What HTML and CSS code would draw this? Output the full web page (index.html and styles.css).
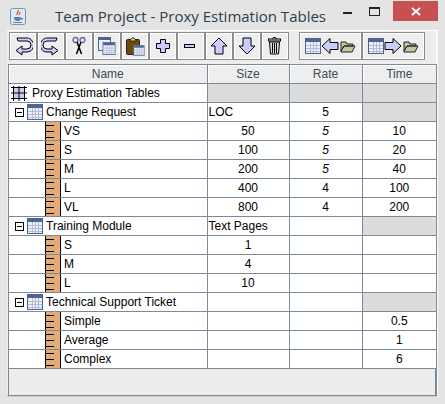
FILE: index.html
```html
<!DOCTYPE html>
<html lang="en">
<head>
    <meta charset="UTF-8">
    <meta name="viewport" content="width=device-width, initial-scale=1.0">
    <title>Team Project - Proxy Estimation Tables</title>
    <link rel="stylesheet" href="styles.css">
</head>
<body>

<svg class="defs" width="0" height="0">
    <defs>
        <symbol id="grid" viewBox="0 0 16 16">
            <rect x="0.5" y="0.5" width="15" height="15" fill="#eef0f8" stroke="#4f6390"/>
            <rect x="1" y="1" width="14" height="3" fill="#4f6390"/>
            <path d="M5.5 4v11M8.5 4v11M11.5 4v11M1 7.5h14M1 10.5h14M1 13.5h14" stroke="#b4bbd8" fill="none"/>
        </symbol>
        <symbol id="ruler" viewBox="0 0 16 19">
            <rect x="0" y="0" width="16" height="19" fill="#e4ab78"/>
            <path d="M0.5 0v19M15.5 0v19M1 3.5h8M1 9.5h8M1 15.5h8" stroke="#000" fill="none"/>
        </symbol>
        <symbol id="folder" viewBox="0 0 16 14">
            <path d="M1 12V3h5l1 2h6v2H4L1 12l3-5h11l-3 6H1z" fill="#c3c8a0" stroke="#222" stroke-width="1" stroke-linejoin="round"/>
        </symbol>
        <symbol id="toggle" viewBox="0 0 9 9">
            <rect x="0.5" y="0.5" width="8" height="8" fill="#fff" stroke="#000"/>
            <path d="M2 4.5h5" stroke="#000"/>
        </symbol>
    </defs>
</svg>

<div class="titlebar">
    <svg class="appicon" width="16" height="17" viewBox="0 0 16 17">
        <rect x="0.5" y="0.5" width="15" height="16" rx="2" fill="#dfe9f3" stroke="#7d94ad"/>
        <path d="M4 9h7c0 3-1 4-3.500 4S4 12 4 9zM11 10h2v1.500h-2z" fill="#5a7fa8"/>
        <path d="M8 2c1 2-2 3-1 5M10 4c0 1-1 2-1 3" stroke="#d9531e" fill="none" stroke-width="1.200"/>
        <path d="M3 14.500h9" stroke="#5a7fa8"/>
    </svg>
    <span class="title">Team Project - Proxy Estimation Tables</span>
    <div class="winbtns">
        <span class="minimize"></span>
        <span class="maximize"></span>
        <span class="close">
            <svg width="10" height="9" viewBox="0 0 10 9"><path d="M1 1l8 7M9 1L1 8" stroke="#fff" stroke-width="2"/></svg>
        </span>
    </div>
</div>

<div class="panel">
    <div class="toolbar">
        <button class="tool">
            <svg width="20" height="20" viewBox="0 0 20 20"><path d="M5 5h9a4 4 0 0 1 0 8H9v-3l-6 4.500 6 4.500v-3h5a7 7 0 0 0 4-12.500C16 2 15 2 14 2H4z" fill="#ccccff" stroke="#000" stroke-linejoin="round"/></svg>
        </button>
        <button class="tool">
            <svg width="20" height="20" viewBox="0 0 20 20"><path d="M15 5H6a4 4 0 0 0 0 8h5v-3l6 4.500-6 4.500v-3H6a7 7 0 0 1-4-12.500C4 2 5 2 6 2h10z" fill="#ccccff" stroke="#000" stroke-linejoin="round"/></svg>
        </button>
        <button class="tool">
            <svg width="20" height="20" viewBox="0 0 20 20"><circle cx="6.500" cy="4" r="2.500" fill="none" stroke="#5a6a9a" stroke-width="1.300"/><circle cx="13.500" cy="4" r="2.500" fill="none" stroke="#5a6a9a" stroke-width="1.300"/><path d="M8 6l4.500 12M12 6L7.500 18" stroke="#000" stroke-width="1.500"/></svg>
        </button>
        <button class="tool">
            <svg width="20" height="20" viewBox="0 0 20 20"><rect x="1.500" y="1.500" width="12" height="13" fill="#eef0f8" stroke="#4f6390"/><rect x="2" y="2" width="11" height="2" fill="#4f6390"/><use href="#grid" x="5" y="6" width="14" height="13"/></svg>
        </button>
        <button class="tool">
            <svg width="20" height="20" viewBox="0 0 20 20"><rect x="1.500" y="3.500" width="13" height="15" rx="1" fill="#6b4a10" stroke="#222"/><path d="M5 4l3-2.500L11 4v1H5z" fill="#f5e04a" stroke="#222"/><use href="#grid" x="8" y="9" width="12" height="11"/></svg>
        </button>
        <button class="tool">
            <svg width="20" height="20" viewBox="0 0 20 20"><path d="M7.500 3.500h5v4h4v5h-4v4h-5v-4h-4v-5h4z" fill="#ccccff" stroke="#000"/></svg>
        </button>
        <button class="tool">
            <svg width="20" height="20" viewBox="0 0 20 20"><rect x="3.500" y="8.500" width="10" height="3" fill="#ccccff" stroke="#000"/></svg>
        </button>
        <button class="tool">
            <svg width="20" height="20" viewBox="0 0 20 20"><path d="M10 2l8 8h-4v8H6v-8H2z" fill="#ccccff" stroke="#000" stroke-linejoin="round"/></svg>
        </button>
        <button class="tool">
            <svg width="20" height="20" viewBox="0 0 20 20"><path d="M10 18l8-8h-4V2H6v8H2z" fill="#ccccff" stroke="#000" stroke-linejoin="round"/></svg>
        </button>
        <button class="tool">
            <svg width="20" height="20" viewBox="0 0 20 20"><rect x="3.500" y="3" width="12" height="2" fill="#ddd" stroke="#000"/><path d="M7.500 3l1-1.500h2l1 1.500" fill="none" stroke="#000"/><path d="M4.500 6h10l-1 12h-8z" fill="#ddd" stroke="#000"/><path d="M7.500 7v10M9.500 7v10M11.500 7v10" stroke="#000"/></svg>
        </button>
        <span class="toolgap"></span>
        <button class="tool wide">
            <svg width="52" height="18" viewBox="0 0 52 18"><use href="#grid" x="0" y="1" width="16" height="16"/><path d="M17 9l8-7.500v4h8v7h-8v4z" fill="#ccccff" stroke="#000" stroke-linejoin="round"/><use href="#folder" x="35" y="2" width="16" height="14"/></svg>
        </button>
        <button class="tool wide">
            <svg width="52" height="18" viewBox="0 0 52 18"><use href="#grid" x="0" y="1" width="16" height="16"/><path d="M33 9l-8-7.500v4h-8v7h8v4z" fill="#ccccff" stroke="#000" stroke-linejoin="round"/><use href="#folder" x="35" y="2" width="16" height="14"/></svg>
        </button>
    </div>

    <div class="tablewrap">
        <table class="grid">
            <colgroup>
                <col class="c-name"><col class="c-size"><col class="c-rate"><col class="c-time">
            </colgroup>
            <thead>
                <tr><th>Name</th><th>Size</th><th>Rate</th><th>Time</th></tr>
            </thead>
            <tbody>
                <tr>
                    <td><div class="name root">
                        <svg class="rooticon" width="16" height="15" viewBox="0 0 16 15"><rect x="2.500" y="1.500" width="11" height="11" fill="#ccccee"/><path d="M2.500 0v15M8 0v15M13.500 0v15M0 1.500h16M0 7h16M0 12.500h16" stroke="#000" fill="none"/></svg>
                        Proxy Estimation Tables</div></td>
                    <td class="off"></td><td class="off"></td><td class="off"></td>
                </tr>

                <tr>
                    <td><div class="name group"><svg class="toggle"><use href="#toggle"/></svg><svg class="tblicon"><use href="#grid"/></svg>Change Request</div></td>
                    <td>LOC</td><td class="num">5</td><td class="off"></td>
                </tr>
                <tr>
                    <td><div class="name item"><svg class="ruler"><use href="#ruler"/></svg>VS</div></td>
                    <td class="num">50</td><td class="num calc">5</td><td class="num">10</td>
                </tr>
                <tr>
                    <td><div class="name item"><svg class="ruler"><use href="#ruler"/></svg>S</div></td>
                    <td class="num">100</td><td class="num calc">5</td><td class="num">20</td>
                </tr>
                <tr>
                    <td><div class="name item"><svg class="ruler"><use href="#ruler"/></svg>M</div></td>
                    <td class="num">200</td><td class="num calc">5</td><td class="num">40</td>
                </tr>
                <tr>
                    <td><div class="name item"><svg class="ruler"><use href="#ruler"/></svg>L</div></td>
                    <td class="num">400</td><td class="num">4</td><td class="num">100</td>
                </tr>
                <tr>
                    <td><div class="name item"><svg class="ruler"><use href="#ruler"/></svg>VL</div></td>
                    <td class="num">800</td><td class="num">4</td><td class="num">200</td>
                </tr>

                <tr>
                    <td><div class="name group"><svg class="toggle"><use href="#toggle"/></svg><svg class="tblicon"><use href="#grid"/></svg>Training Module</div></td>
                    <td>Text Pages</td><td></td><td class="off"></td>
                </tr>
                <tr>
                    <td><div class="name item"><svg class="ruler"><use href="#ruler"/></svg>S</div></td>
                    <td class="num">1</td><td></td><td></td>
                </tr>
                <tr>
                    <td><div class="name item"><svg class="ruler"><use href="#ruler"/></svg>M</div></td>
                    <td class="num">4</td><td></td><td></td>
                </tr>
                <tr>
                    <td><div class="name item"><svg class="ruler"><use href="#ruler"/></svg>L</div></td>
                    <td class="num">10</td><td></td><td></td>
                </tr>

                <tr>
                    <td><div class="name group"><svg class="toggle"><use href="#toggle"/></svg><svg class="tblicon"><use href="#grid"/></svg>Technical Support Ticket</div></td>
                    <td></td><td></td><td class="off"></td>
                </tr>
                <tr>
                    <td><div class="name item"><svg class="ruler"><use href="#ruler"/></svg>Simple</div></td>
                    <td></td><td></td><td class="num">0.5</td>
                </tr>
                <tr>
                    <td><div class="name item"><svg class="ruler"><use href="#ruler"/></svg>Average</div></td>
                    <td></td><td></td><td class="num">1</td>
                </tr>
                <tr>
                    <td><div class="name item"><svg class="ruler"><use href="#ruler"/></svg>Complex</div></td>
                    <td></td><td></td><td class="num">6</td>
                </tr>
            </tbody>
        </table>
    </div>
</div>

</body>
</html>
```

FILE: styles.css
```css
html, body { margin: 0; height: 100%; overflow: hidden; }
body { background: #e4e4e4; width: 445px; height: 404px; font-family: "Liberation Sans", Arial, sans-serif; font-size: 12px; color: #000; box-sizing: border-box; padding-right: 7px; }
.defs { display: block; height: 0; }

.titlebar { height: 30px; display: flex; align-items: flex-start; padding-left: 10px; }
.appicon { margin-top: 8px; }
.title { font-family: "Open Sans", sans-serif; font-size: 15px; line-height: 20px; color: #2c3e50; margin-left: 29px; margin-top: 6px; }
.winbtns { margin-left: auto; display: flex; align-items: flex-start; }
.minimize { width: 9px; height: 2px; background: #222; margin-top: 12px; margin-right: 17px; }
.maximize { width: 9px; height: 6px; border: 1px solid #222; border-top-width: 2px; margin-top: 7px; margin-right: 13px; }
.close { width: 45px; height: 20px; background: #c75050; display: flex; align-items: center; justify-content: center; margin-top: 1px; }

.panel { margin-left: 7px; height: 367px; background: #ececec; border-top: 1px solid #fff; border-right: 2px solid #fafafa; border-bottom: 2px solid #cfcfcf; box-sizing: border-box; }

.toolbar { display: flex; height: 31px; padding: 1px 0 0 2px; box-sizing: border-box; }
.tool { width: 28px; height: 28px; padding: 0; background: #eeeeee; border: 1px solid #8d8d8d; box-shadow: inset 0 0 0 1px #fff; display: flex; align-items: center; justify-content: center; }
.tool.wide { width: 63px; }
.toolgap { width: 10px; }

.tablewrap { margin: 2px 0 0 1px; width: 429px; height: 332px; border: 1px solid #7a8a99; border-right-width: 2px; box-sizing: border-box; background: #ececec; }
.grid { border-collapse: collapse; table-layout: fixed; width: 427px; }
.c-name { width: 198px; }
.c-size { width: 82px; }
.c-rate { width: 73px; }
.c-time { width: 74px; }

.grid th, .grid td { height: 18px; padding: 0; border: 1px solid #7a8a99; white-space: nowrap; overflow: hidden; }
.grid tr > :first-child { border-left: 0; }
.grid tr > :last-child { border-right: 0; }
.grid thead th { border-top: 0; }
.grid th { font-weight: normal; color: #3a4a5a; background: #eeeeee; box-shadow: inset 1px 1px 0 #fff; }
.grid td { background: #fff; padding-left: 1px; }
.grid td:first-child { padding-left: 0; }
.grid td.off { background: #dcdcdc; }
.grid td.num { text-align: center; padding-left: 0; }
.grid td.calc { font-style: italic; }

.name { display: flex; align-items: center; height: 18px; }
.root { background: #fff; }
.rooticon { margin: 0 5px 0 2px; flex: none; }
.toggle { width: 9px; height: 9px; margin-left: 6px; flex: none; }
.tblicon { width: 16px; height: 16px; margin: 0 3px 0 3px; flex: none; }
.ruler { width: 16px; height: 19px; margin: 0 3px 0 36px; flex: none; }
```
